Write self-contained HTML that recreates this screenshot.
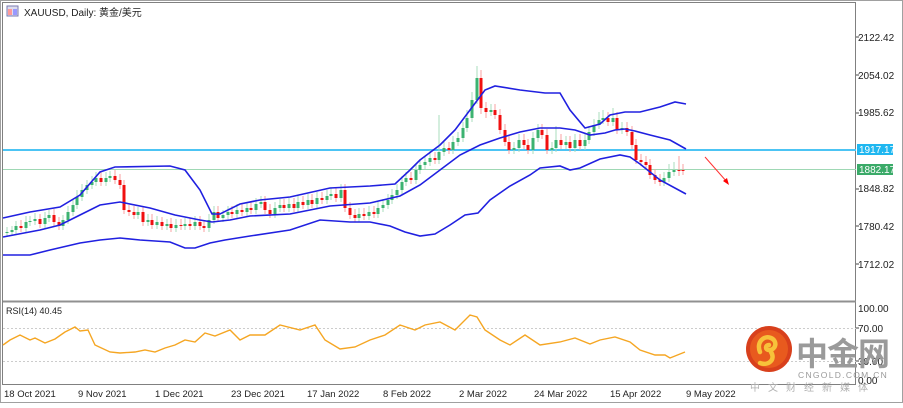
<!DOCTYPE html><html><head><meta charset="utf-8"><style>
body{margin:0;width:903px;height:403px;overflow:hidden;background:#fff;font-family:"Liberation Sans","Noto Sans CJK SC",sans-serif}
svg text{font-family:"Liberation Sans","Noto Sans CJK SC",sans-serif}
</style></head><body>
<svg width="903" height="403" xmlns="http://www.w3.org/2000/svg">
<rect x="0" y="0" width="903" height="403" fill="#fff"/>
<rect x="0.5" y="0.5" width="902" height="402" fill="none" stroke="#a0a0a0"/>
<rect x="2.5" y="2.5" width="853" height="382" fill="none" stroke="#808080"/>
<line x1="3" y1="301.5" x2="856" y2="301.5" stroke="#909090" stroke-width="2"/>
<rect x="7" y="6" width="11" height="10" fill="#dde" stroke="#7a7ab0"/>
<rect x="8" y="9" width="4" height="6" fill="#f99"/><rect x="13" y="9" width="4" height="6" fill="#99f"/>
<text x="24" y="16" font-size="10" fill="#222">XAUUSD, Daily:  黄金/美元</text>
<g font-size="10" fill="#222">
<text x="858" y="41">2122.42</text><text x="858" y="79">2054.02</text><text x="858" y="116">1985.62</text>
<text x="858" y="192">1848.82</text><text x="858" y="230">1780.42</text><text x="858" y="268">1712.02</text>
<text x="858" y="312">100.00</text><text x="858" y="332">70.00</text><text x="858" y="365">30.00</text><text x="858" y="384">0.00</text>
</g>
<g stroke="#444"><line x1="856" y1="37" x2="859" y2="37"/><line x1="856" y1="75" x2="859" y2="75"/><line x1="856" y1="113" x2="859" y2="113"/><line x1="856" y1="189" x2="859" y2="189"/><line x1="856" y1="226" x2="859" y2="226"/><line x1="856" y1="264" x2="859" y2="264"/><line x1="856" y1="328" x2="859" y2="328"/><line x1="856" y1="361" x2="859" y2="361"/></g>
<line x1="3" y1="150" x2="856" y2="150" stroke="#4cc4f4" stroke-width="2"/>
<line x1="3" y1="169.5" x2="856" y2="169.5" stroke="#9fd8b4" stroke-width="1"/>
<rect x="857" y="144" width="36" height="11" fill="#1fb7f0"/><text x="859" y="153" font-size="10" fill="#fff">1917.17</text>
<rect x="857" y="164" width="36" height="11" fill="#3aaa68"/><text x="859" y="173" font-size="10" fill="#fff">1882.17</text>
<line x1="705" y1="157" x2="727" y2="182" stroke="#f33" stroke-width="1"/>
<path d="M729,185 L723,181 L727,178 Z" fill="#f00"/>
<line x1="3" y1="328.5" x2="856" y2="328.5" stroke="#ccc" stroke-dasharray="2,2"/>
<line x1="3" y1="361.5" x2="856" y2="361.5" stroke="#ccc" stroke-dasharray="2,2"/>
<text x="6" y="314" font-size="9" fill="#222">RSI(14) 40.45</text>

<!-- wicks -->
<path fill="none" stroke="#a8dcbc" stroke-width="1" d="M7 227V237M12 226V236M16 221V234M26 216V232M30 216V226M35 213V225M45 212V228M49 210V222M63 215V230M68 206V224M73 200V216M77 190V209M82 184V201M87 180V194M92 176V189M96 172V186M106 172V186M110 171V182M138 207V219M148 214V226M157 216V229M167 219V230M176 219V232M185 218V230M195 216V230M209 214V232M214 206V224M223 210V222M228 206V219M237 204V218M247 202V216M256 198V214M261 196V208M275 202V218M280 199V212M289 198V212M298 196V212M308 194V209M317 192V208M327 190V204M331 188V200M341 184V202M359 208V222M369 206V220M378 202V218M383 199V212M388 194V209M392 189V204M397 184V199M402 176V194M406 172V186M416 164V184M420 159V174M425 156V169M430 150V166M439 115V164M444 142V156M453 136V154M458 132V146M463 122V142M467 110V132M472 92V122M477 66V104M491 104V116M514 142V154M519 134V152M533 132V154M538 124V142M552 142V154M556 126V152M566 136V149M575 134V152M585 134V150M589 126V144M594 119V136M599 112V129M603 110V124M613 108V126M622 122V134M664 172V186M669 164V182M674 162V176"/>
<path fill="none" stroke="#f8a0a0" stroke-width="1" d="M21 220V232M40 214V228M54 209V226M59 217V230M101 172V186M115 170V184M120 174V189M124 180V214M129 205V216M134 206V219M143 207V226M152 214V229M162 217V230M171 218V232M181 219V230M190 218V230M200 216V230M204 220V232M218 206V222M232 206V218M242 204V216M251 202V214M265 196V214M270 204V218M284 199V212M294 198V212M303 196V209M312 194V208M322 192V204M336 188V202M345 184V212M350 202V219M355 209V222M364 208V220M374 206V218M411 172V184M435 152V164M449 142V154M481 70V114M486 102V118M495 104V119M500 109V134M505 124V146M509 136V154M524 134V149M528 139V154M542 124V139M547 129V154M561 134V149M570 136V152M580 134V150M608 112V126M617 112V134M627 122V136M632 126V149M636 139V164M641 154V166M646 156V169M650 159V179M655 169V184M660 174V186M679 156V176M683 164V175"/>
<!-- bodies -->
<path fill="none" stroke="#3cb371" stroke-width="3" d="M7 232V233M12 230V232M16 226V230M26 222V228M30 221V222M35 219V221M45 218V224M49 215V218M63 220V226M68 212V220M73 205V212M77 197V205M82 190V197M87 185V190M92 182V185M96 178V182M106 178V182M110 176V178M138 212V215M148 220V222M157 222V225M167 224V226M176 225V228M185 224V226M195 222V226M209 220V228M214 212V220M223 215V218M228 212V215M237 210V214M247 208V212M256 204V210M261 202V204M275 208V214M280 205V208M289 204V208M298 202V208M308 200V205M317 198V204M327 196V200M331 194V196M341 190V198M359 214V218M369 212V216M378 208V214M383 205V208M388 200V205M392 195V200M397 190V195M402 182V190M406 178V182M416 170V180M420 165V170M425 162V165M430 158V162M439 152V160M444 148V152M453 142V150M458 138V142M463 128V138M467 118V128M472 100V118M477 78V100M491 110V112M514 148V150M519 140V148M533 138V150M538 130V138M552 148V150M556 140V148M566 142V145M575 140V148M585 140V146M589 132V140M594 125V132M599 120V125M603 118V120M613 118V122M622 128V130M664 178V182M669 172V178M674 170V172"/>
<path fill="none" stroke="#f01010" stroke-width="3" d="M21 226V228M40 219V224M54 215V222M59 222V226M101 178V182M115 176V180M120 180V185M124 185V210M129 210V212M134 212V215M143 212V222M152 220V225M162 222V226M171 224V228M181 225V226M190 224V226M200 222V226M204 226V228M218 212V218M232 212V214M242 210V212M251 208V210M265 202V210M270 210V214M284 205V208M294 204V208M303 202V205M312 200V204M322 198V200M336 194V198M345 190V208M350 208V215M355 215V218M364 214V216M374 212V214M411 178V180M435 158V160M449 148V150M481 78V108M486 108V112M495 110V115M500 115V130M505 130V142M509 142V150M524 140V145M528 145V150M542 130V135M547 135V150M561 140V145M570 142V148M580 140V146M608 118V122M617 118V130M627 128V132M632 132V145M636 145V160M641 160V162M646 162V165M650 165V175M655 175V180M660 180V182M679 170V171M683 170V171"/>

<polyline fill="none" stroke="#2020e0" stroke-width="1.6" points="3,218 30,212 60,207 80,195 100,172 115,167 170,166 185,170 200,190 212,214 220,214 240,204 260,200 290,197 330,188 370,186 395,184 410,170 420,160 440,145 455,130 470,110 485,90 495,86 520,90 545,93 560,93 570,110 585,128 600,124 610,115 625,112 640,112 660,107 675,102 686,104"/>
<polyline fill="none" stroke="#2020e0" stroke-width="1.6" points="3,237 40,230 60,225 80,215 100,205 120,202 150,208 175,215 200,220 212,222 230,220 250,216 290,214 310,210 330,206 370,203 400,196 420,185 440,170 460,155 480,145 500,138 520,132 540,128 560,128 575,130 590,135 605,133 615,130 625,129 635,131 650,135 670,140 686,149"/>
<polyline fill="none" stroke="#2020e0" stroke-width="1.6" points="3,255 30,255 50,250 80,243 100,240 120,238 140,240 170,242 185,248 195,248 210,243 225,240 250,236 290,230 320,220 350,222 370,222 390,226 405,232 420,236 435,234 450,225 465,215 478,213 490,200 510,186 530,175 540,168 560,166 570,170 580,168 600,159 620,155 630,157 640,164 660,180 686,194"/>
<polyline fill="none" stroke="#f5a623" stroke-width="1.4" points="3,345 10,340 20,335 30,340 35,338 45,343 55,339 65,332 75,327 80,331 88,330 95,345 110,352 120,353 135,352 145,350 155,352 165,348 175,345 185,340 195,342 205,333 215,336 230,330 240,340 250,335 265,335 280,325 300,330 315,325 325,340 340,349 355,347 370,340 385,335 400,325 415,330 425,325 440,322 455,330 470,315 477,317 485,330 500,340 510,345 525,335 540,345 560,342 575,338 590,344 600,340 615,337 630,342 640,350 655,355 665,355 670,358 685,352"/>
<g font-size="9.5" fill="#222">
<text x="4" y="397">18 Oct 2021</text><text x="78" y="397">9 Nov 2021</text><text x="155" y="397">1 Dec 2021</text><text x="231" y="397">23 Dec 2021</text><text x="307" y="397">17 Jan 2022</text><text x="383" y="397">8 Feb 2022</text><text x="459" y="397">2 Mar 2022</text><text x="534" y="397">24 Mar 2022</text><text x="610" y="397">15 Apr 2022</text><text x="686" y="397">9 May 2022</text>
</g>
<circle cx="769" cy="349" r="23" fill="#d8401c"/>
<circle cx="769" cy="349" r="19" fill="#e85a1e"/>
<path d="M760,352 C756,342 764,335 771,338 C778,341 776,350 769,350 C765,350 765,345 769,345 M771,352 C776,360 768,366 760,363" fill="none" stroke="#f7c23a" stroke-width="4.5" stroke-linecap="round"/>
<text x="796" y="365" font-size="32" font-weight="bold" fill="#9a9a9a" letter-spacing="-1">中金网</text>
<text x="798" y="378" font-size="8.5" fill="#999" letter-spacing="1.3">CNGOLD.COM.CN</text>
<text x="750" y="391" font-size="10" fill="#b0b0b0" letter-spacing="8">中文财经新媒体</text>
</svg>
</body></html>
